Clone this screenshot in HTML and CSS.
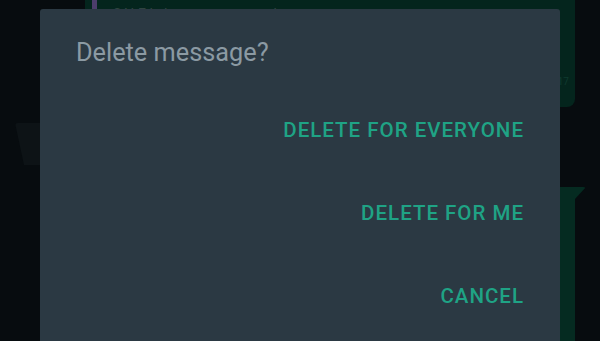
FILE: index.html
```html
<!DOCTYPE html>
<html lang="en">
  <head>
    <meta charset="UTF-8" />
    <meta name="viewport" content="width=device-width, initial-scale=1.0" />
    <title>Delete message</title>
    <link rel="stylesheet" href="styles.css">
  </head>
  <body class="body">
    <div class="chat">
      <div class="bubble out top">
        <div class="quote">
          <span class="quote-text">SALE la la semana con ocho</span>
        </div>
        <span class="time">2:17</span>
      </div>
      <div class="tail-in"></div>
      <div class="bubble out second"></div>
    </div>

    <div class="dialog">
      <h2 class="dialog-title">Delete message?</h2>
      <div class="actions">
        <button class="action">DELETE FOR EVERYONE</button>
        <button class="action">DELETE FOR ME</button>
        <button class="action">CANCEL</button>
      </div>
    </div>
  </body>
</html>
```

FILE: styles.css
```css
.body {
  margin: 0;
  width: 600px;
  height: 341px;
  overflow: hidden;
  background-color: #070c0f;
  font-family: Roboto, "Liberation Sans", sans-serif;
  position: relative;
}
.chat {
  display: flex;
  flex-direction: column;
}
.bubble {
  background-color: #04251d;
  border-radius: 0 0 8px 8px;
}
.bubble.top {
  margin-left: 85px;
  width: 490px;
  height: 107px;
  position: relative;
}
.quote {
  margin-left: 7px;
  width: 300px;
  height: 20px;
  border-left: 5px solid #4c3d6b;
  padding-left: 16px;
}
.quote-text {
  display: block;
  padding-top: 6px;
  color: #2f4440;
  font-size: 14px;
  line-height: 16px;
}
.time {
  position: absolute;
  right: 6px;
  bottom: 20px;
  font-size: 10px;
  color: #0f3a2f;
}
.tail-in {
  margin: 16px 0 0 15px;
  width: 30px;
  height: 42px;
  background-color: #0d1316;
  border-top-left-radius: 3px;
  clip-path: polygon(0 0, 100% 0, 100% 100%, 30% 100%);
}
.bubble.second {
  margin: 22px 0 0 300px;
  width: 275px;
  height: 200px;
  border-radius: 0;
  position: relative;
  background-color: #052b21;
}
.bubble.second::after {
  content: "";
  position: absolute;
  top: 0;
  right: -11px;
  width: 11px;
  height: 12px;
  background-color: #052b21;
  border-top-right-radius: 3px;
  clip-path: polygon(0 0, 100% 0, 0 100%);
}
.dialog {
  position: absolute;
  left: 40px;
  top: 9px;
  width: 520px;
  height: 360px;
  background-color: #2b3943;
  border-radius: 3px;
  padding: 28px 36px 0 36px;
  box-sizing: border-box;
}
.dialog-title {
  margin: 0;
  font-size: 25.3px;
  line-height: 32px;
  font-weight: 400;
  color: #8b9aa3;
}
.actions {
  margin-top: 49px;
  display: flex;
  flex-direction: column;
  align-items: flex-end;
  gap: 59px;
}
.action {
  border: none;
  background: none;
  padding: 0;
  font-family: Roboto, "Liberation Sans", sans-serif;
  font-size: 20.5px;
  line-height: 24px;
  font-weight: 500;
  letter-spacing: 1px;
  color: #1fa385;
}
```
